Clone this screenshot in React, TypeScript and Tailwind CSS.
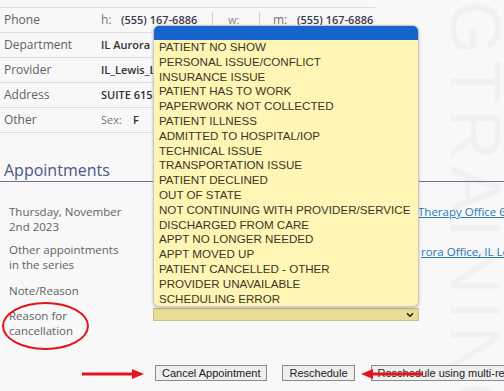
import { ChevronDown } from 'lucide-react';

const reasons = [
  'PATIENT NO SHOW',
  'PERSONAL ISSUE/CONFLICT',
  'INSURANCE ISSUE',
  'PATIENT HAS TO WORK',
  'PAPERWORK NOT COLLECTED',
  'PATIENT ILLNESS',
  'ADMITTED TO HOSPITAL/IOP',
  'TECHNICAL ISSUE',
  'TRANSPORTATION ISSUE',
  'PATIENT DECLINED',
  'OUT OF STATE',
  'NOT CONTINUING WITH PROVIDER/SERVICE',
  'DISCHARGED FROM CARE',
  'APPT NO LONGER NEEDED',
  'APPT MOVED UP',
  'PATIENT CANCELLED - OTHER',
  'PROVIDER UNAVAILABLE',
  'SCHEDULING ERROR',
];

function InfoRow({ label, children }: { label: string; children: React.ReactNode }) {
  return (
    <div className="flex h-[25px] items-center border-b border-[#dedede]">
      <div className="w-[101px] shrink-0 pl-[4px]">{label}</div>
      <div className="flex items-center whitespace-nowrap">{children}</div>
    </div>
  );
}

function RedArrow({ dir }: { dir: 'left' | 'right' }) {
  return (
    <svg width="62" height="10" viewBox="0 0 62 10">
      {dir === 'right' ? (
        <>
          <line x1="0" y1="5" x2="52" y2="5" stroke="#e3141c" strokeWidth="3" />
          <polygon points="50,0 62,5 50,10" fill="#e3141c" />
        </>
      ) : (
        <>
          <line x1="10" y1="5" x2="62" y2="5" stroke="#e3141c" strokeWidth="3" />
          <polygon points="12,0 0,5 12,10" fill="#e3141c" />
        </>
      )}
    </svg>
  );
}

export default function App() {
  return (
    <div className="relative h-[391px] w-[504px] overflow-hidden bg-[#f8f8f8] font-['Open_Sans',sans-serif] text-[12px] text-[#626262]">
      {/* faint training watermark */}
      <div className="pointer-events-none absolute left-[440px] top-[0px] origin-top-left rotate-90 translate-x-[70px] whitespace-nowrap font-['Liberation_Sans',sans-serif] text-[70px] leading-none tracking-[6px] text-[#f1f1f1]">
        GTRAINING
      </div>

      <div className="relative">
        {/* patient info */}
        <div className="mt-[7px] w-[375px] border-t border-[#dedede]">
          <InfoRow label="Phone">
            <span className="w-[20px] text-[#777]">h:</span>
            <span className="w-[91px] text-[11px] font-semibold text-[#3a3a4e]">(555) 167-6886</span>
            <span className="h-[16px] border-l border-[#cfcfcf]" />
            <span className="ml-[15px] w-[31px] text-[11px] text-[#888]">w:</span>
            <span className="h-[16px] border-l border-[#cfcfcf]" />
            <span className="ml-[13px] w-[24px] text-[#777]">m:</span>
            <span className="text-[11px] font-semibold text-[#3a3a4e]">(555) 167-6886</span>
          </InfoRow>
          <InfoRow label="Department">
            <span className="text-[11px] font-semibold text-[#333]">IL Aurora Counseling</span>
          </InfoRow>
          <InfoRow label="Provider">
            <span className="text-[11px] font-semibold text-[#333]">IL_Lewis_Laura</span>
          </InfoRow>
          <InfoRow label="Address">
            <span className="text-[11px] font-semibold text-[#333]">SUITE 615</span>
          </InfoRow>
          <InfoRow label="Other">
            <span className="w-[32px] text-[11px] text-[#777]">Sex:</span>
            <span className="text-[11px] font-semibold text-[#333]">F</span>
          </InfoRow>
        </div>

        {/* appointments */}
        <div className="mt-[26px] border-b border-[#6e6e9a] pl-[4px] text-[16px] leading-[22px] text-[#4b5784]">
          Appointments
        </div>

        <div className="text-[11.5px] leading-[15px]">
          <div className="mt-[22px] flex">
            <div className="w-[153px] shrink-0 pl-[9px]">
              Thursday, November
              <br />
              2nd 2023
            </div>
            <div className="whitespace-nowrap">
              <a className="ml-[265px] text-[#2b78b5] underline"> Therapy Office 6</a>
            </div>
          </div>
          <div className="mt-[8px] flex">
            <div className="w-[153px] shrink-0 pl-[9px]">
              Other appointments
              <br />
              in the series
            </div>
            <div className="whitespace-nowrap pt-[2px]">
              <a className="ml-[268px] text-[#2b78b5] underline">rora Office, IL Le</a>
            </div>
          </div>
          <div className="mt-[11px] flex">
            <div className="w-[153px] shrink-0 pl-[9px]">Note/Reason</div>
          </div>
          <div className="mt-[10px] flex">
            <div className="w-[153px] shrink-0 pl-[9px]">
              Reason for
              <br />
              cancellation
            </div>
            <div className="flex h-[13px] w-[266px] items-center justify-end border border-[#cbbf7e] bg-[#e8dc97] pr-[3px]">
              <ChevronDown size={10} strokeWidth={4} className="text-[#222]" />
            </div>
          </div>
        </div>

        {/* action buttons */}
        <div className="mt-[27px] flex items-center whitespace-nowrap font-['Liberation_Sans',sans-serif] text-[11px] text-[#222]">
          <div className="w-[155px] shrink-0" />
          <button className="h-[16px] border border-[#8a8a8a] bg-[#efefef] px-[6px] leading-[14px]">
            Cancel Appointment
          </button>
          <button className="ml-[15px] h-[16px] border border-[#8a8a8a] bg-[#efefef] px-[6px] leading-[14px]">
            Reschedule
          </button>
          <button className="ml-[16px] h-[16px] border border-[#8a8a8a] bg-[#efefef] px-[6px] leading-[14px]">
            Reschedule using multi-resource scheduler
          </button>
        </div>
      </div>

      {/* open dropdown list */}
      <div className="absolute left-[153px] top-[25px] w-[266px] overflow-hidden rounded-[6px] border border-[#c9c9c9] bg-[#fff5b5] shadow-[0_1px_3px_rgba(0,0,0,0.25)]">
        <div className="h-[14px] bg-[#1764cc]" />
        <ul className="font-['Liberation_Sans',sans-serif] text-[11.6px] leading-[14.8px] text-[#3b3526]">
          {reasons.map((r) => (
            <li key={r} className="pl-[5px] whitespace-nowrap">
              {r}
            </li>
          ))}
        </ul>
      </div>

      {/* red annotations */}
      <div className="pointer-events-none absolute left-[2px] top-[302px] h-[48px] w-[87px] rounded-[50%] border-2 border-[#e3141c]" />
      <div className="pointer-events-none absolute left-[82px] top-[369px]">
        <RedArrow dir="right" />
      </div>
      <div className="pointer-events-none absolute left-[361px] top-[369px]">
        <RedArrow dir="left" />
      </div>
    </div>
  );
}
